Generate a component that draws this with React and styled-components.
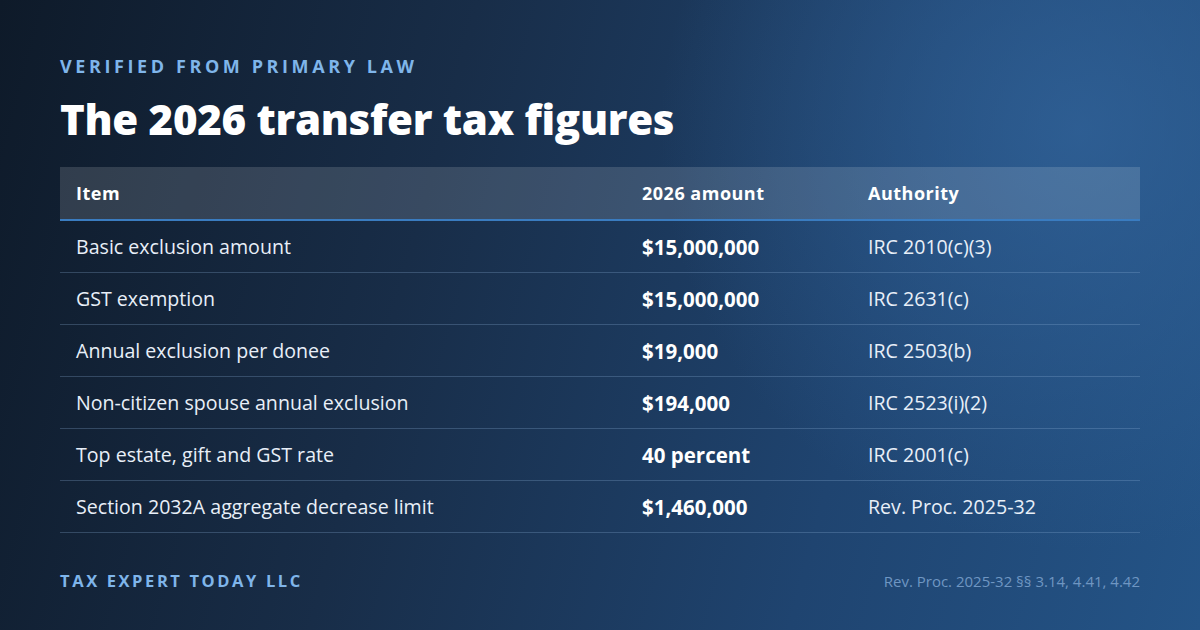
import styled, { createGlobalStyle } from 'styled-components';

const rows = [
  { item: 'Basic exclusion amount', amount: '$15,000,000', authority: 'IRC 2010(c)(3)' },
  { item: 'GST exemption', amount: '$15,000,000', authority: 'IRC 2631(c)' },
  { item: 'Annual exclusion per donee', amount: '$19,000', authority: 'IRC 2503(b)' },
  { item: 'Non-citizen spouse annual exclusion', amount: '$194,000', authority: 'IRC 2523(i)(2)' },
  { item: 'Top estate, gift and GST rate', amount: '40 percent', authority: 'IRC 2001(c)' },
  { item: 'Section 2032A aggregate decrease limit', amount: '$1,460,000', authority: 'Rev. Proc. 2025-32' },
];

function App() {
  return (
    <>
      <GlobalStyle />
      <Card>
        <Eyebrow>Verified from primary law</Eyebrow>
        <Title>The 2026 transfer tax figures</Title>
        <Table>
          <thead>
            <tr>
              <HeadCell>Item</HeadCell>
              <HeadCell>2026 amount</HeadCell>
              <HeadCell>Authority</HeadCell>
            </tr>
          </thead>
          <tbody>
            {rows.map((row) => (
              <tr key={row.item}>
                <Cell>{row.item}</Cell>
                <Cell $bold>{row.amount}</Cell>
                <Cell>{row.authority}</Cell>
              </tr>
            ))}
          </tbody>
        </Table>
        <Footer>
          <Brand>Tax Expert Today LLC</Brand>
          <Source>Rev. Proc. 2025-32 §§ 3.14, 4.41, 4.42</Source>
        </Footer>
      </Card>
    </>
  );
}

const GlobalStyle = createGlobalStyle`
  body {
    margin: 0;
    font-family: "Open Sans", "Noto Sans", sans-serif;
  }
`;

const Card = styled.div`
  width: 1200px;
  height: 630px;
  box-sizing: border-box;
  padding: 54px 60px 0;
  color: #e8eff8;
  background:
    radial-gradient(circle at 1080px 130px, rgba(50, 100, 155, 0.75) 0, rgba(50, 100, 155, 0) 420px),
    linear-gradient(105deg, #0e1a29 0%, #182d48 35%, #1f4470 70%, #245487 100%);
  display: flex;
  flex-direction: column;
`;

const Eyebrow = styled.div`
  font-size: 18px;
  font-weight: 700;
  letter-spacing: 3.6px;
  text-transform: uppercase;
  color: #7fb5ea;
  line-height: 24px;
`;

const Title = styled.h1`
  margin: 13px 0 0;
  font-size: 42px;
  font-weight: 800;
  color: #ffffff;
  line-height: 56px;
  letter-spacing: -0.3px;
`;

const Table = styled.table`
  margin-top: 20px;
  width: 1080px;
  border-collapse: collapse;
  table-layout: fixed;

  th:nth-child(1), td:nth-child(1) { width: 534px; }
  th:nth-child(2), td:nth-child(2) { width: 194px; }
`;

const HeadCell = styled.th`
  height: 52px;
  padding: 0 16px;
  text-align: left;
  font-size: 18px;
  font-weight: 700;
  letter-spacing: 0.5px;
  color: #ffffff;
  background: rgba(255, 255, 255, 0.14);
  border-bottom: 2px solid #3a7cc0;
`;

const Cell = styled.td`
  height: 51px;
  padding: 0 16px;
  font-size: ${(p) => (p.$bold ? '20.5px' : '19.6px')};
  font-weight: ${(p) => (p.$bold ? 700 : 400)};
  color: ${(p) => (p.$bold ? '#ffffff' : '#e8eff8')};
  border-bottom: 1px solid rgba(140, 175, 215, 0.28);
  white-space: nowrap;
`;

const Footer = styled.div`
  margin-top: 36px;
  display: flex;
  justify-content: space-between;
  align-items: center;
`;

const Brand = styled.div`
  font-size: 16.5px;
  font-weight: 700;
  letter-spacing: 2.6px;
  text-transform: uppercase;
  color: #7fb5ea;
`;

const Source = styled.div`
  font-size: 15px;
  color: #6f96c2;
`;

export default App;
